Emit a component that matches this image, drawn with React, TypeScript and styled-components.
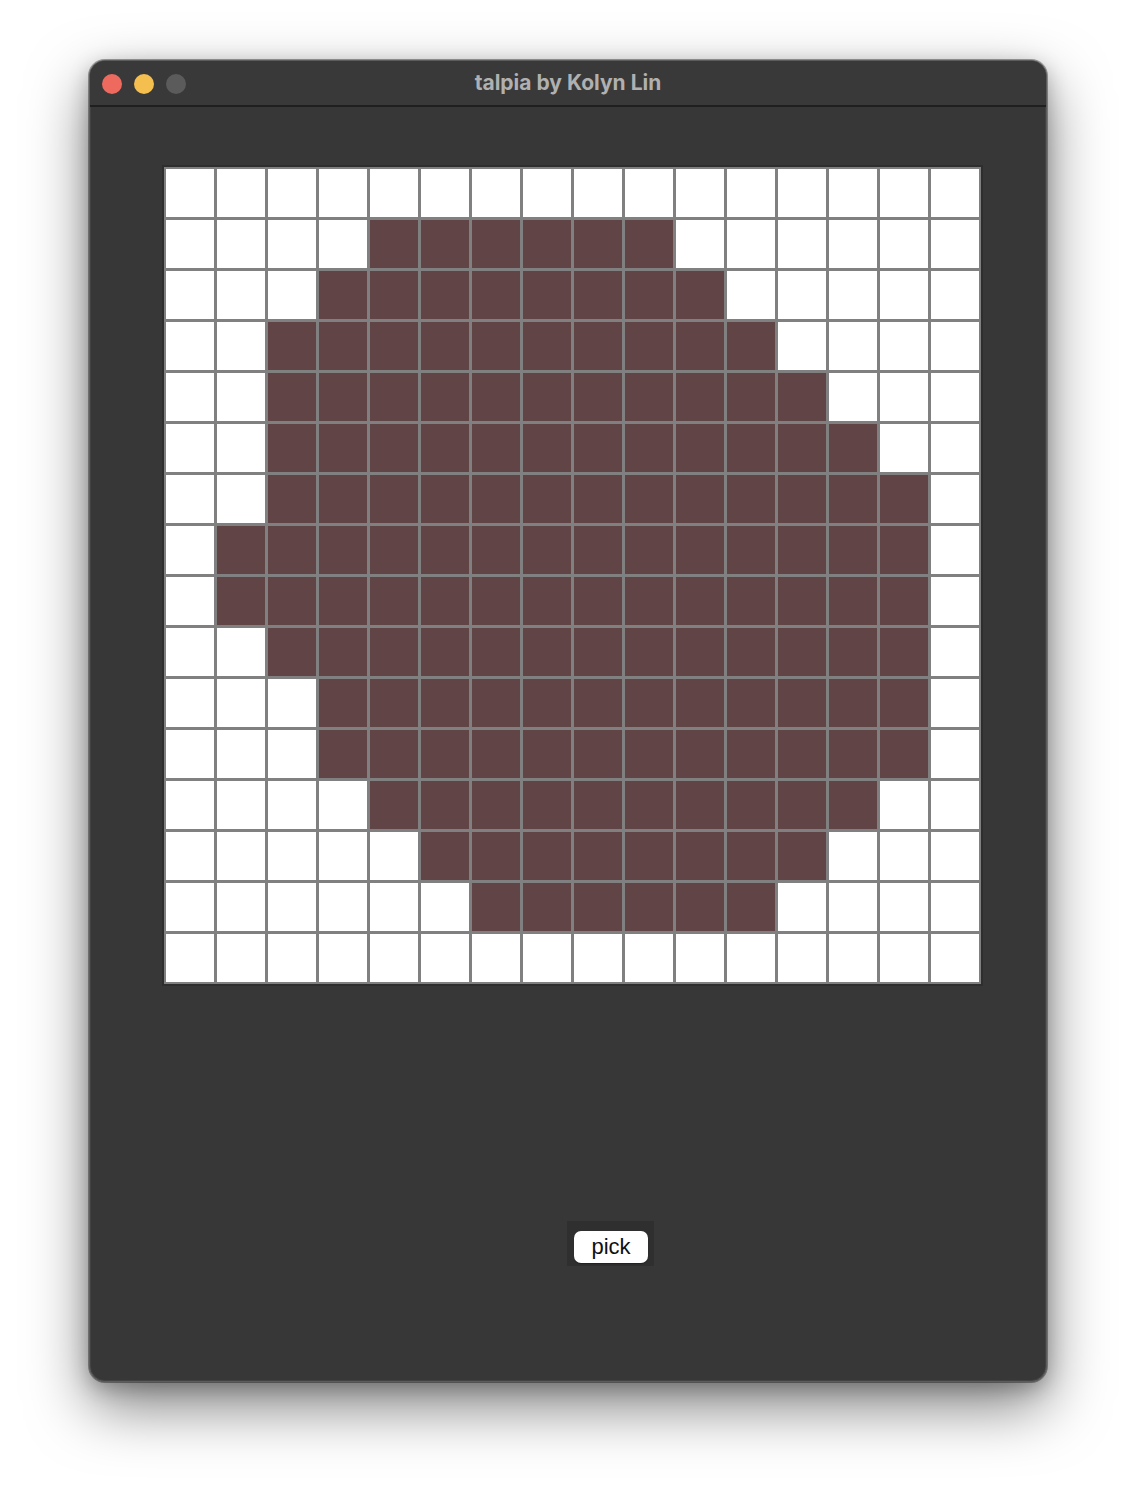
import React from "react";
import styled, { createGlobalStyle } from "styled-components";

const Global = createGlobalStyle`
  html, body { margin: 0; padding: 0; background: #ffffff; }
  body { font-family: "Inter", "Liberation Sans", sans-serif; }
`;

const Page = styled.div`
  width: 1136px;
  height: 1500px;
  padding: 60px 0 0 89px;
  box-sizing: border-box;
`;

const Window = styled.div`
  width: 958px;
  height: 1322px;
  box-sizing: border-box;
  border-radius: 16px;
  border: 1px solid #5c5c5c;
  background: #373737;
  overflow: hidden;
  display: flex;
  flex-direction: column;
  box-shadow: 0 0 0 1px rgba(0, 0, 0, 0.35), 0 24px 60px rgba(0, 0, 0, 0.5),
    0 6px 20px rgba(0, 0, 0, 0.25), inset 0 0 0 1px rgba(255, 255, 255, 0.06);
`;

const TitleBar = styled.div`
  height: 44px;
  flex: 0 0 44px;
  background: #393939;
  border-bottom: 2px solid #1f1f1f;
  display: flex;
  align-items: center;
  position: relative;
  padding-left: 12px;
`;

const Lights = styled.div`
  display: flex;
  gap: 12px;
  padding-top: 1px;
`;

const Light = styled.span<{ $c: string }>`
  width: 20px;
  height: 20px;
  border-radius: 50%;
  background: ${(p) => p.$c};
  display: block;
`;

const Title = styled.div`
  position: absolute;
  left: 0;
  right: 0;
  top: 0;
  bottom: 0;
  display: flex;
  align-items: center;
  justify-content: center;
  padding-bottom: 1px;
  font-family: "Inter", "Liberation Sans", sans-serif;
  font-weight: 700;
  font-size: 21px;
  color: #b0b0b0;
  pointer-events: none;
`;

const Content = styled.div`
  flex: 1;
  display: flex;
  flex-direction: column;
  align-items: flex-start;
  padding: 58px 0 0 72px;
`;

const Frame = styled.div`
  padding: 2px;
  background: #2e2e2e;
`;

const Grid = styled.div`
  display: grid;
  grid-template-columns: repeat(16, 48px);
  grid-auto-rows: 48px;
  gap: 3px;
  padding: 2px;
  background: #808080;
`;

const Cell = styled.div<{ $on: boolean }>`
  background: ${(p) => (p.$on ? "#614445" : "#ffffff")};
`;

const PickWrap = styled.div`
  margin: 235px 0 0 405px;
  padding: 10px 6px 3px 7px;
  background: #2f2f2f;
`;

const PickButton = styled.button`
  width: 74px;
  height: 32px;
  border: none;
  border-radius: 7px;
  background: #ffffff;
  color: #111111;
  font-family: "Liberation Sans", "Inter", sans-serif;
  font-size: 22px;
  padding: 0 0 1px;
  display: flex;
  align-items: center;
  justify-content: center;
  box-shadow: 0 1px 1px rgba(0, 0, 0, 0.3);
`;

const ranges: Array<[number, number] | null> = [
  null,
  [4, 9],
  [3, 10],
  [2, 11],
  [2, 12],
  [2, 13],
  [2, 14],
  [1, 14],
  [1, 14],
  [2, 14],
  [3, 14],
  [3, 14],
  [4, 13],
  [5, 12],
  [6, 11],
  null,
];

export default function App() {
  const cells: React.ReactNode[] = [];
  ranges.forEach((r, row) => {
    for (let col = 0; col < 16; col++) {
      const on = r ? col >= r[0] && col <= r[1] : false;
      cells.push(<Cell key={`${row}-${col}`} $on={on} />);
    }
  });
  return (
    <Page>
      <Global />
      <Window>
        <TitleBar>
          <Lights>
            <Light $c="#ee6a5f" />
            <Light $c="#f5bf4f" />
            <Light $c="#5b5b5b" />
          </Lights>
          <Title>talpia by Kolyn Lin</Title>
        </TitleBar>
        <Content>
          <Frame>
            <Grid>{cells}</Grid>
          </Frame>
          <PickWrap>
            <PickButton>pick</PickButton>
          </PickWrap>
        </Content>
      </Window>
    </Page>
  );
}
